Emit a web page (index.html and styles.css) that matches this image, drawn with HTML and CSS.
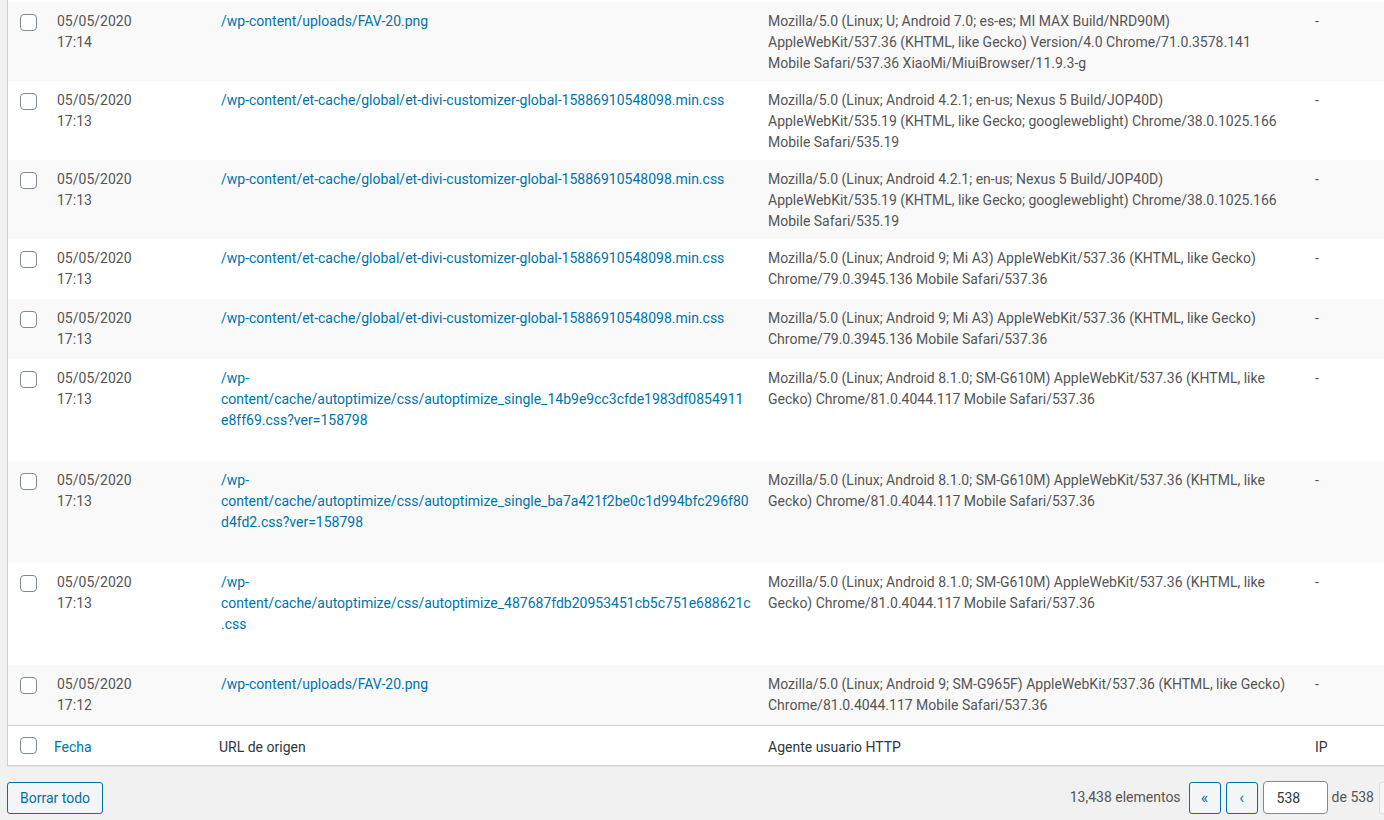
FILE: index.html
```html
<!DOCTYPE html>
<html>
<head>
  <meta charset="utf-8">
  <link rel="stylesheet" href="styles.css">
</head>
<body>
  <div class="wrap">
    <table class="log-table">
      <colgroup>
        <col class="col-check">
        <col class="col-date">
        <col class="col-url">
        <col class="col-agent">
        <col class="col-ip">
      </colgroup>
      <tbody>
        <tr class="row-cut"><td colspan="5"></td></tr>

        <tr>
          <th class="check-column"><span class="checkbox"></span></th>
          <td>05/05/2020<br>17:14</td>
          <td class="column-url"><a href="#">/wp-content/uploads/FAV-20.png</a><div class="row-actions"></div></td>
          <td>Mozilla/5.0 (Linux; U; Android 7.0; es-es; MI MAX Build/NRD90M) AppleWebKit/537.36 (KHTML, like Gecko) Version/4.0 Chrome/71.0.3578.141 Mobile Safari/537.36 XiaoMi/MiuiBrowser/11.9.3-g</td>
          <td>-</td>
        </tr>

        <tr>
          <th class="check-column"><span class="checkbox"></span></th>
          <td>05/05/2020<br>17:13</td>
          <td class="column-url"><a href="#">/wp-content/et-cache/global/et-divi-customizer-global-15886910548098.min.css</a><div class="row-actions"></div></td>
          <td>Mozilla/5.0 (Linux; Android 4.2.1; en-us; Nexus 5 Build/JOP40D) AppleWebKit/535.19 (KHTML, like Gecko; googleweblight) Chrome/38.0.1025.166 Mobile Safari/535.19</td>
          <td>-</td>
        </tr>

        <tr>
          <th class="check-column"><span class="checkbox"></span></th>
          <td>05/05/2020<br>17:13</td>
          <td class="column-url"><a href="#">/wp-content/et-cache/global/et-divi-customizer-global-15886910548098.min.css</a><div class="row-actions"></div></td>
          <td>Mozilla/5.0 (Linux; Android 4.2.1; en-us; Nexus 5 Build/JOP40D) AppleWebKit/535.19 (KHTML, like Gecko; googleweblight) Chrome/38.0.1025.166 Mobile Safari/535.19</td>
          <td>-</td>
        </tr>

        <tr>
          <th class="check-column"><span class="checkbox"></span></th>
          <td>05/05/2020<br>17:13</td>
          <td class="column-url"><a href="#">/wp-content/et-cache/global/et-divi-customizer-global-15886910548098.min.css</a><div class="row-actions"></div></td>
          <td>Mozilla/5.0 (Linux; Android 9; Mi A3) AppleWebKit/537.36 (KHTML, like Gecko) Chrome/79.0.3945.136 Mobile Safari/537.36</td>
          <td>-</td>
        </tr>

        <tr>
          <th class="check-column"><span class="checkbox"></span></th>
          <td>05/05/2020<br>17:13</td>
          <td class="column-url"><a href="#">/wp-content/et-cache/global/et-divi-customizer-global-15886910548098.min.css</a><div class="row-actions"></div></td>
          <td>Mozilla/5.0 (Linux; Android 9; Mi A3) AppleWebKit/537.36 (KHTML, like Gecko) Chrome/79.0.3945.136 Mobile Safari/537.36</td>
          <td>-</td>
        </tr>

        <tr>
          <th class="check-column"><span class="checkbox"></span></th>
          <td>05/05/2020<br>17:13</td>
          <td class="column-url"><a href="#">/wp-content/cache/autoptimize/css/autoptimize_single_14b9e9cc3cfde1983df0854911<wbr>e8ff69.css?ver=158798</a><div class="row-actions"></div></td>
          <td>Mozilla/5.0 (Linux; Android 8.1.0; SM-G610M) AppleWebKit/537.36 (KHTML, like Gecko) Chrome/81.0.4044.117 Mobile Safari/537.36</td>
          <td>-</td>
        </tr>

        <tr>
          <th class="check-column"><span class="checkbox"></span></th>
          <td>05/05/2020<br>17:13</td>
          <td class="column-url"><a href="#">/wp-content/cache/autoptimize/css/autoptimize_single_ba7a421f2be0c1d994bfc296f80d4fd2.css?ver=158798</a><div class="row-actions"></div></td>
          <td>Mozilla/5.0 (Linux; Android 8.1.0; SM-G610M) AppleWebKit/537.36 (KHTML, like Gecko) Chrome/81.0.4044.117 Mobile Safari/537.36</td>
          <td>-</td>
        </tr>

        <tr>
          <th class="check-column"><span class="checkbox"></span></th>
          <td>05/05/2020<br>17:13</td>
          <td class="column-url"><a href="#">/wp-content/cache/autoptimize/css/autoptimize_487687fdb20953451cb5c751e688621c.css</a><div class="row-actions"></div></td>
          <td>Mozilla/5.0 (Linux; Android 8.1.0; SM-G610M) AppleWebKit/537.36 (KHTML, like Gecko) Chrome/81.0.4044.117 Mobile Safari/537.36</td>
          <td>-</td>
        </tr>

        <tr>
          <th class="check-column"><span class="checkbox"></span></th>
          <td>05/05/2020<br>17:12</td>
          <td class="column-url"><a href="#">/wp-content/uploads/FAV-20.png</a><div class="row-actions"></div></td>
          <td>Mozilla/5.0 (Linux; Android 9; SM-G965F) AppleWebKit/537.36 (KHTML, like Gecko) Chrome/81.0.4044.117 Mobile Safari/537.36</td>
          <td>-</td>
        </tr>
      </tbody>
      <tfoot>
        <tr>
          <td class="check-column"><span class="checkbox"></span></td>
          <th class="sortable"><a href="#">Fecha</a></th>
          <th class="column-url">URL de origen</th>
          <th>Agente usuario HTTP</th>
          <th>IP</th>
        </tr>
      </tfoot>
    </table>

    <div class="tablenav">
      <button class="button">Borrar todo</button>
      <div class="tablenav-pages">
        <span class="displaying-num">13,438 elementos</span>
        <a class="page-button" href="#">«</a>
        <a class="page-button" href="#">‹</a>
        <input class="current-page" type="text" value="538">
        <span class="paging-text">de 538</span>
        <span class="page-button disabled">›</span>
        <span class="page-button disabled">»</span>
      </div>
    </div>
  </div>
</body>
</html>
```

FILE: styles.css
```css
html, body {
  overflow: hidden;
}

body {
  margin: 0;
  background: #f1f1f1;
  font-family: "Segoe UI", Roboto, "Noto Sans", sans-serif;
  font-size: 14px;
  line-height: 21px;
  color: #444;
}

.wrap {
  width: 1446px;
  padding-left: 7px;
}

.log-table {
  width: 100%;
  table-layout: fixed;
  border-spacing: 0;
  background: #fff;
  border: 1px solid #ccd0d4;
  border-top: none;
  box-shadow: 0 1px 1px rgba(0,0,0,0.04);
}

.col-check { width: 39px; }
.col-date { width: 164px; }
.col-url { width: 547px; }
.col-agent { width: 547px; }

.log-table td,
.log-table th {
  padding: 9px 10px 7px;
  vertical-align: top;
  text-align: left;
  overflow-wrap: break-word;
}

.log-table tbody td {
  color: #555;
}

.log-table tbody .column-url {
  padding-right: 6px;
}

.log-table tbody tr:nth-child(even) {
  background: #f9f9f9;
}

.log-table .row-cut td {
  padding: 0;
  height: 2px;
}

.log-table a {
  color: #0073aa;
  text-decoration: none;
}

.row-actions {
  height: 23px;
}

.log-table .check-column {
  padding: 12px 0 0 12px;
}

.checkbox {
  display: block;
  width: 15px;
  height: 15px;
  border: 1px solid #7e8993;
  border-radius: 4px;
  background: #fff;
}

.log-table tfoot th,
.log-table tfoot td {
  border-top: 1px solid #ccd0d4;
  padding-top: 11px;
  font-weight: normal;
  color: #32373c;
}

.log-table tfoot .check-column {
  padding-top: 11px;
}

.log-table tfoot .sortable {
  padding-left: 7px;
}

.log-table tfoot .column-url {
  padding-left: 8px;
}

.tablenav {
  display: flex;
  align-items: center;
  justify-content: space-between;
  margin-top: 15px;
}

.button {
  height: 32px;
  padding: 0 12px;
  font-family: inherit;
  font-size: 14px;
  color: #0071a1;
  background: #f3f5f6;
  border: 1px solid #0071a1;
  border-radius: 3px;
  cursor: pointer;
}

.tablenav-pages {
  display: flex;
  align-items: center;
}

.displaying-num {
  color: #555;
  margin-right: 8px;
}

.page-button {
  display: flex;
  align-items: center;
  justify-content: center;
  box-sizing: border-box;
  width: 32px;
  height: 32px;
  margin-right: 5px;
  font-size: 16px;
  color: #0071a1;
  background: #f3f5f6;
  border: 1px solid #0071a1;
  border-radius: 3px;
  text-decoration: none;
}

.page-button.disabled {
  color: #a0a5aa;
  background: #f7f7f7;
  border-color: #ddd;
}

.current-page {
  box-sizing: border-box;
  width: 65px;
  height: 33px;
  margin: 0 4px 0 0;
  padding: 0 0 0 13px;
  font-family: inherit;
  font-size: 14px;
  color: #32373c;
  border: 1px solid #7e8993;
  border-radius: 4px;
  background: #fff;
}

.paging-text {
  color: #555;
  margin-right: 5px;
}
```
